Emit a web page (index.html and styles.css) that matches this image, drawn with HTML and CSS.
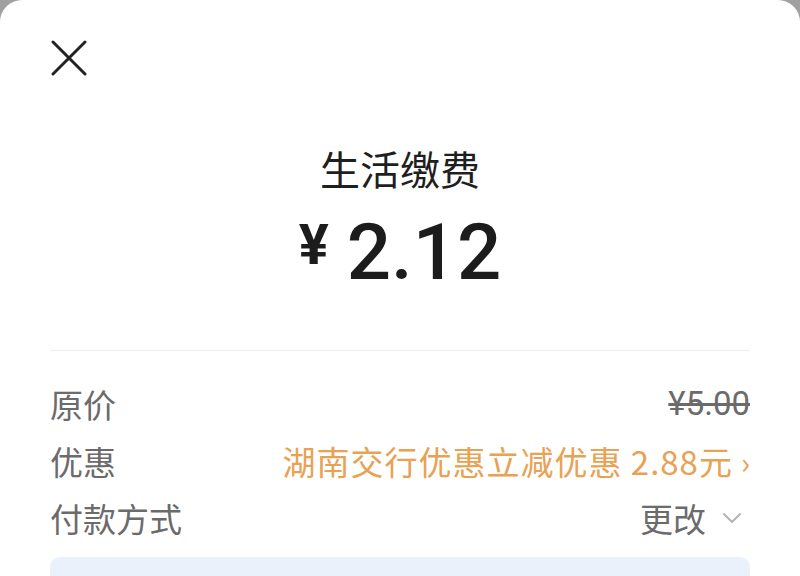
FILE: index.html
```html
<!DOCTYPE html>
<html lang="zh-CN">
<head>
<meta charset="utf-8">
<link rel="stylesheet" href="styles.css">
</head>
<body>
<div class="sheet">
  <div class="header">
    <svg class="close" width="36" height="36" viewBox="0 0 36 36" aria-label="关闭">
      <path d="M2 2 L34 34 M34 2 L2 34" stroke="#222" stroke-width="3" stroke-linecap="round" fill="none"/>
    </svg>
  </div>
  <div class="title">生活缴费</div>
  <div class="amount"><span class="yen">¥</span><span class="num">2.12</span></div>
  <div class="divider"></div>
  <div class="rows">
    <div class="row"><span class="label">原价</span><span class="value strike">¥5.00</span></div>
    <div class="row"><span class="label">优惠</span><span class="value promo">湖南交行优惠立减优惠 2.88元<span class="arrow">›</span></span></div>
    <div class="row"><span class="label">付款方式</span><span class="value change">更改<svg class="chev" width="20" height="12" viewBox="0 0 20 12"><path d="M2 2 L10 10 L18 2" stroke="#b3b3b3" stroke-width="2" fill="none" stroke-linecap="round" stroke-linejoin="round"/></svg></span></div>
  </div>
  <div class="card"></div>
</div>
</body>
</html>
```
FILE: styles.css
```css
html, body {
  margin: 0;
  padding: 0;
  background: #a0a0a0;
}
body {
  font-family: Roboto, "Noto Sans CJK SC", sans-serif;
  width: 800px;
  height: 576px;
  overflow: hidden;
}
.sheet {
  background: #fff;
  border-radius: 22px 22px 0 0;
  height: 576px;
  padding: 0 50px;
  box-sizing: border-box;
}
.header {
  height: 118px;
  padding-top: 40px;
  box-sizing: border-box;
}
.close {
  display: block;
  margin-left: 1px;
}
.title {
  text-align: center;
  font-family: "Noto Sans CJK SC", sans-serif;
  font-size: 40px;
  line-height: 56px;
  color: #1f1f1f;
  margin-top: 22px;
}
.amount {
  display: flex;
  justify-content: center;
  align-items: flex-start;
  margin-top: 18px;
  color: #1c1c1c;
  height: 82px;
}
.yen {
  font-family: Roboto, sans-serif;
  font-weight: 700;
  font-size: 56px;
  line-height: 56px;
  margin-top: 3px;
  margin-right: 18px;
}
.num {
  font-family: Roboto, sans-serif;
  font-weight: 500;
  font-size: 78px;
  line-height: 78px;
}
.divider {
  height: 1px;
  background: #efefef;
  margin-top: 54px;
}
.rows {
  margin-top: 24px;
}
.row {
  display: flex;
  justify-content: space-between;
  align-items: center;
  height: 57px;
  font-family: "Noto Sans CJK SC", sans-serif;
  font-size: 33px;
}
.label {
  color: #6b6b6b;
}
.value {
  display: flex;
  align-items: center;
}
.strike {
  color: #6b6b6b;
  text-decoration: line-through;
  font-family: Roboto, sans-serif;
  font-size: 33px;
}
.promo {
  color: #e9a153;
  letter-spacing: 1px;
}
.arrow {
  font-size: 30px;
  margin-left: 8px;
  letter-spacing: 0;
}
.change {
  color: #6b6b6b;
}
.chev {
  margin-left: 16px;
  margin-right: 8px;
}
.card {
  margin-top: 11px;
  height: 40px;
  background: #eaf1fb;
  border-radius: 10px;
}
```
